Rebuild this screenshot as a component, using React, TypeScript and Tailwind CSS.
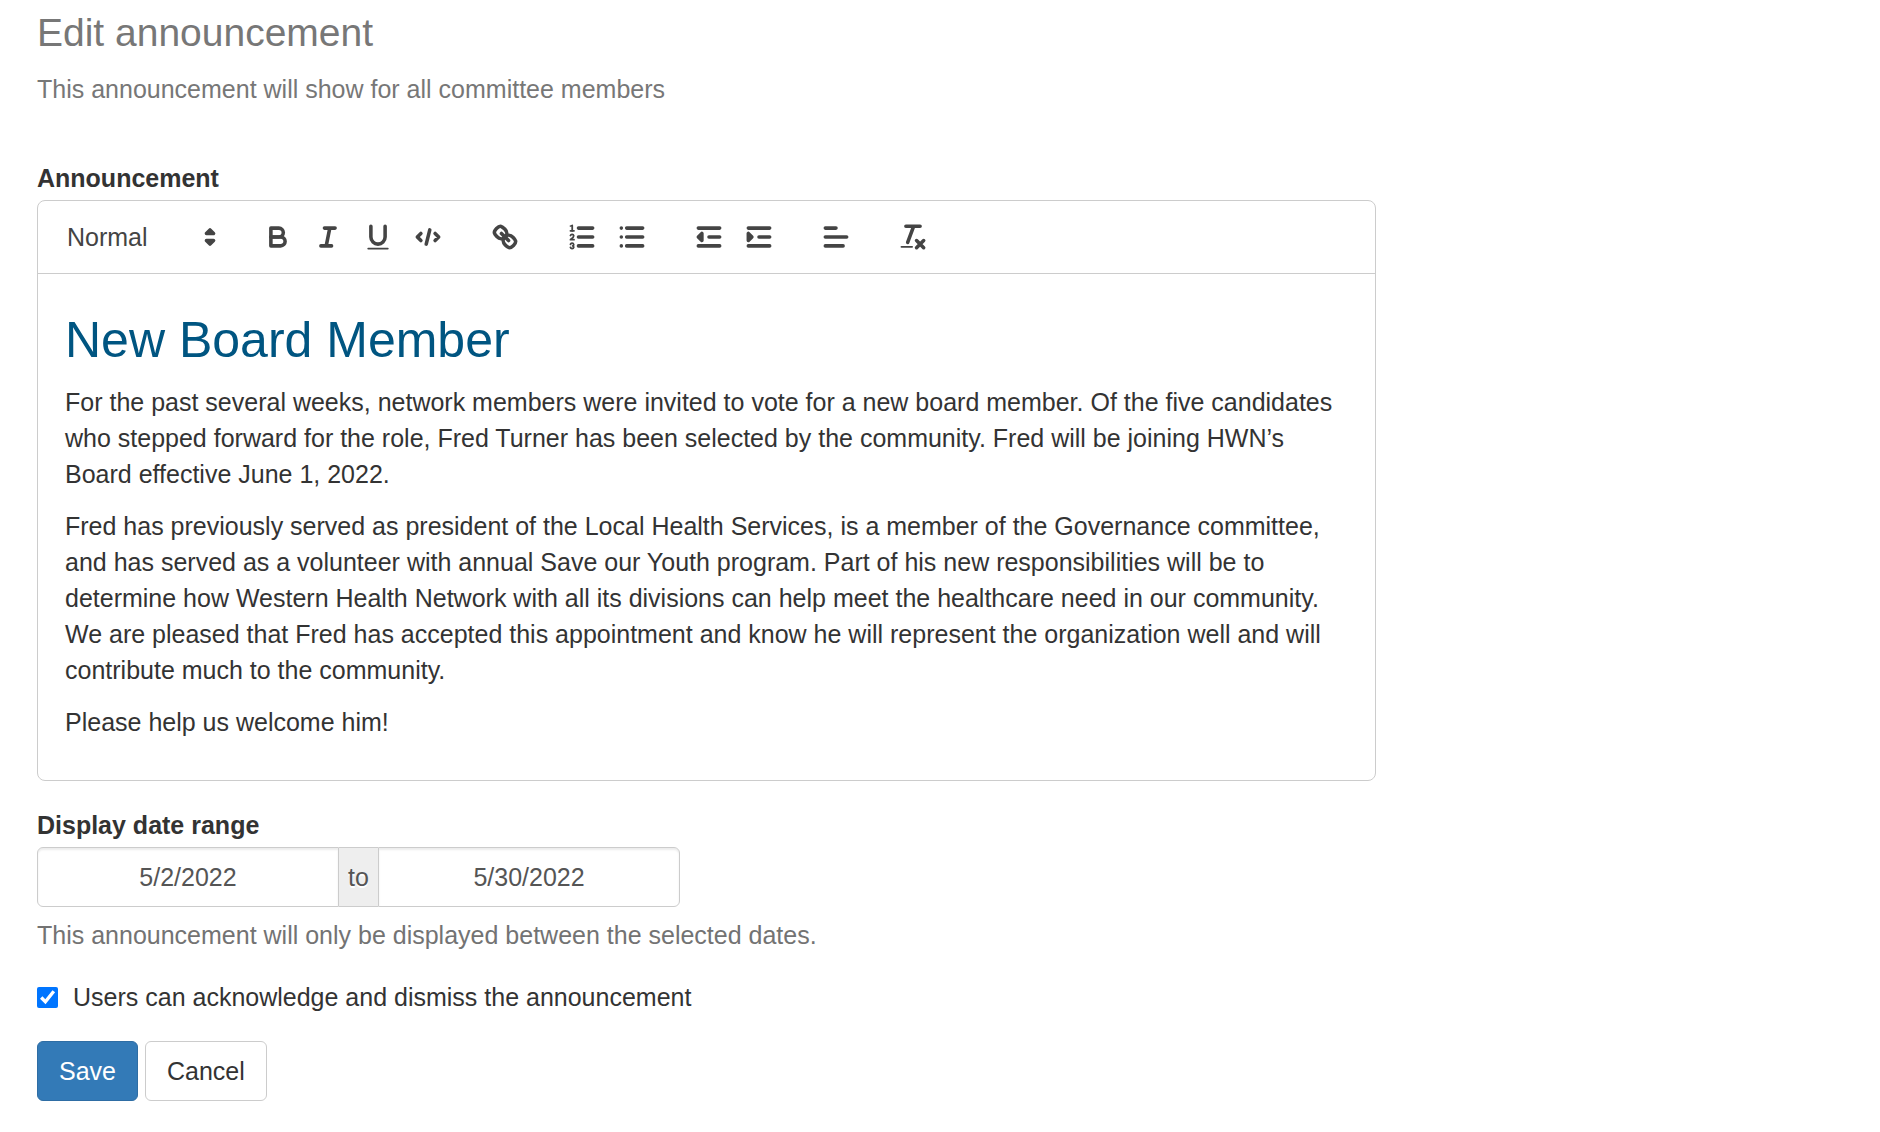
import { useState } from 'react'
import type { ReactNode } from 'react'

function Icon({ children }: { children: ReactNode }) {
  return (
    <svg
      viewBox="0 0 18 18"
      className="size-8"
      fill="none"
      stroke="#444"
      strokeWidth="2"
      strokeLinecap="round"
      strokeLinejoin="round"
      aria-hidden="true"
    >
      {children}
    </svg>
  )
}

const toolbarGroups: { label: string; icon: ReactNode }[][] = [
  [
    {
      label: 'Bold',
      icon: (
        <>
          <path d="M5,4H9.5A2.5,2.5,0,0,1,12,6.5v0A2.5,2.5,0,0,1,9.5,9H5V4Z" />
          <path d="M5,9h5.5A2.5,2.5,0,0,1,13,11.5v0A2.5,2.5,0,0,1,10.5,14H5V9Z" />
        </>
      ),
    },
    { label: 'Italic', icon: <path d="M7,4H13M5,14H11M8,14L10,4" /> },
    {
      label: 'Underline',
      icon: (
        <>
          <path d="M5,3V9a4.012,4.012,0,0,0,4,4H9a4.012,4.012,0,0,0,4-4V3" />
          <rect x="3" y="15" width="12" height="1" rx="0.5" fill="#444" stroke="none" />
        </>
      ),
    },
    { label: 'Code block', icon: <path d="M5,7L3,9L5,11M13,7L15,9L13,11M10,5L8,13" /> },
  ],
  [
    {
      label: 'Link',
      icon: (
        <>
          <path d="M7,7L11,11" />
          <path d="M8.9,4.577a3.476,3.476,0,0,1,.36,4.679A3.476,3.476,0,0,1,4.577,8.9C3.185,7.5,2.035,6.4,4.217,4.217S7.5,3.185,8.9,4.577Z" />
          <path d="M13.423,9.1a3.476,3.476,0,0,0-4.679-.36,3.476,3.476,0,0,0,.36,4.679c1.392,1.392,2.5,2.542,4.679.36S14.815,10.5,13.423,9.1Z" />
        </>
      ),
    },
  ],
  [
    {
      label: 'Ordered list',
      icon: (
        <>
          <path d="M7,4H15M7,9H15M7,14H15" />
          <path d="M2.5,5.5H4.5" strokeWidth="1" />
          <path
            d="M3.5,6A0.5,0.5,0,0,1,3,5.5V3.085l-0.276.138A0.5,0.5,0,0,1,2.053,3c-0.124-.247-0.023-0.324.224-0.447l1-.5A0.5,0.5,0,0,1,4,2.5v3A0.5,0.5,0,0,1,3.5,6Z"
            fill="#444"
            stroke="none"
          />
          <path d="M4.5,10.5h-2c0-.234,1.85-1.076,1.85-2.234A0.959,0.959,0,0,0,2.5,8.156" strokeWidth="1" />
          <path
            d="M2.5,14.846a0.959,0.959,0,0,0,1.85-.109A0.7,0.7,0,0,0,3.75,14a0.688,0.688,0,0,0,.6-0.736,0.959,0.959,0,0,0-1.85-.109"
            strokeWidth="1"
          />
        </>
      ),
    },
    { label: 'Bullet list', icon: <path d="M6,4H15M6,9H15M6,14H15M3,4H3M3,9H3M3,14H3" /> },
  ],
  [
    {
      label: 'Decrease indent',
      icon: (
        <>
          <path d="M3,14H15M3,4H15M9,9H15" />
          <path d="M5,7V11L3,9Z" fill="#444" />
        </>
      ),
    },
    {
      label: 'Increase indent',
      icon: (
        <>
          <path d="M3,14H15M3,4H15M9,9H15" />
          <path d="M3,7V11L5,9Z" fill="#444" />
        </>
      ),
    },
  ],
  [{ label: 'Align', icon: <path d="M3,9H15M3,14H13M3,4H9" /> }],
  [
    {
      label: 'Clear formatting',
      icon: (
        <>
          <path d="M5,3H13M6,12L9.35,3M11,11L15,15M15,11L11,15" />
          <rect x="2" y="14" width="7" height="1" rx="0.5" fill="#444" stroke="none" />
        </>
      ),
    },
  ],
]

function Toolbar() {
  return (
    <div className="flex flex-wrap items-center gap-x-[27px] border-b border-[#ccc] p-3.5">
      <div className="relative w-[174px]">
        <select
          aria-label="Text style"
          className="h-11 w-full appearance-none bg-transparent pl-[15px] text-[#444] outline-none"
        >
          <option>Normal</option>
          <option>Heading 1</option>
          <option>Heading 2</option>
        </select>
        <span className="pointer-events-none absolute inset-y-0 right-0 flex items-center">
          <Icon>
            <path d="M7,11L9,13L11,11ZM7,7L9,5L11,7Z" />
          </Icon>
        </span>
      </div>
      {toolbarGroups.map((group) => (
        <div key={group[0].label} className="flex">
          {group.map(({ label, icon }) => (
            <button
              key={label}
              type="button"
              aria-label={label}
              title={label}
              className="flex h-11 w-[50px] items-center justify-center"
            >
              <Icon>{icon}</Icon>
            </button>
          ))}
        </div>
      ))}
    </div>
  )
}

function AnnouncementEditor() {
  return (
    <div className="rounded-lg border border-[#ccc]">
      <Toolbar />
      <div
        contentEditable
        suppressContentEditableWarning
        role="textbox"
        aria-multiline="true"
        aria-labelledby="announcement-label"
        className="px-[27px] pt-9 pb-6 outline-none"
      >
        <h2 className="mb-3.5 text-[50px] leading-[60px] text-[#005581]">New Board Member</h2>
        <p className="mb-4">
          For the past several weeks, network members were invited to vote for a new board member. Of the five
          candidates who stepped forward for the role, Fred Turner has been selected by the community. Fred will be
          joining HWN’s Board effective June 1, 2022.
        </p>
        <p className="mb-4">
          Fred has previously served as president of the Local Health Services, is a member of the Governance
          committee, and has served as a volunteer with annual Save our Youth program. Part of his new
          responsibilities will be to determine how Western Health Network with all its divisions can help meet the
          healthcare need in our community. We are pleased that Fred has accepted this appointment and know he will
          represent the organization well and will contribute much to the community.
        </p>
        <p className="mb-4">Please help us welcome him!</p>
      </div>
    </div>
  )
}

function DateRange() {
  const [start, setStart] = useState('5/2/2022')
  const [end, setEnd] = useState('5/30/2022')
  const inputClass =
    'h-[60px] min-w-0 flex-1 border border-[#ccc] text-center text-[#555] shadow-[inset_0_2px_2px_rgba(0,0,0,0.075)] outline-none'

  return (
    <div className="flex max-w-[643px]">
      <input
        id="start-date"
        type="text"
        value={start}
        onChange={(event) => setStart(event.target.value)}
        className={`${inputClass} rounded-l-md`}
      />
      <label
        htmlFor="end-date"
        className="flex w-[39px] items-center justify-center border-y border-[#ccc] bg-[#eee] text-[#555] [text-shadow:0_2px_0_#fff]"
      >
        to
      </label>
      <input
        id="end-date"
        type="text"
        value={end}
        onChange={(event) => setEnd(event.target.value)}
        className={`${inputClass} rounded-r-md`}
      />
    </div>
  )
}

export default function App() {
  const [dismissible, setDismissible] = useState(true)

  return (
    <main className="min-h-screen bg-white px-[37px] font-['Liberation_Sans',Arial,sans-serif] text-[25px] leading-9 text-[#333]">
      <form className="max-w-[1339px]" onSubmit={(event) => event.preventDefault()}>
        <h1 className="pt-[11px] text-[39px] leading-11 text-[#777]">Edit announcement</h1>
        <p className="mt-4 text-[#777]">This announcement will show for all committee members</p>

        <div id="announcement-label" className="mt-[53px] mb-1 font-bold">
          Announcement
        </div>
        <AnnouncementEditor />

        <label htmlFor="start-date" className="mt-[26px] mb-1 block w-fit font-bold">
          Display date range
        </label>
        <DateRange />
        <p className="mt-2.5 text-[#737373]">This announcement will only be displayed between the selected dates.</p>

        <label className="mt-[26px] flex w-fit items-center gap-[15px]">
          <input
            type="checkbox"
            checked={dismissible}
            onChange={(event) => setDismissible(event.target.checked)}
            className="size-[21px]"
          />
          Users can acknowledge and dismiss the announcement
        </label>

        <div className="mt-[26px] flex gap-[7px]">
          <button type="submit" className="h-[60px] rounded-md border border-[#2e6da4] bg-[#337ab7] px-[21px] text-white">
            Save
          </button>
          <button type="button" className="h-[60px] rounded-md border border-[#ccc] bg-white px-[21px]">
            Cancel
          </button>
        </div>
      </form>
    </main>
  )
}
